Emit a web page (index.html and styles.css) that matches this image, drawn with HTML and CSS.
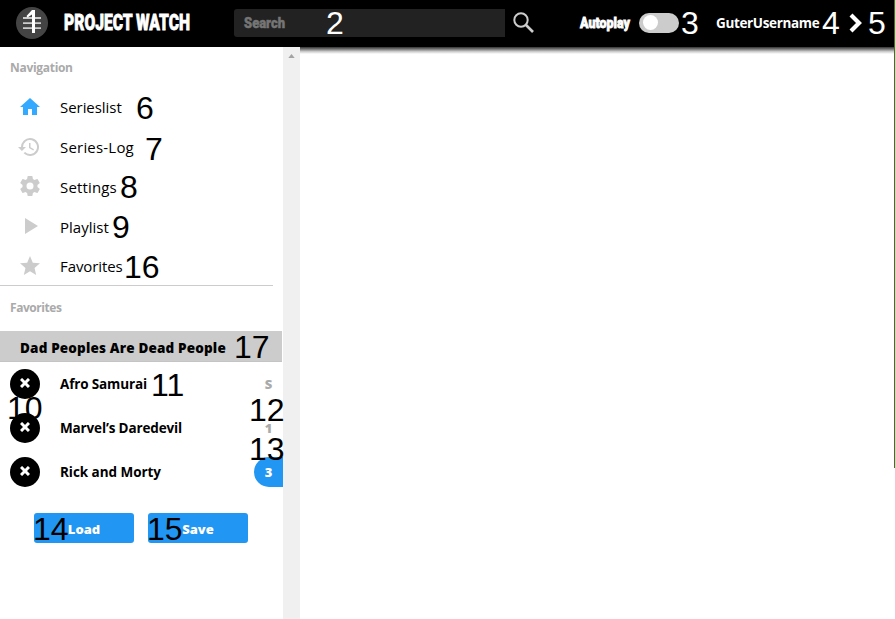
FILE: index.html
```html
<!DOCTYPE html>
<html lang="en">
<head>
<meta charset="utf-8">
<title>Project Watch</title>
<link rel="stylesheet" href="styles.css">
</head>
<body>
<header class="topbar">
  <svg class="logo" viewBox="0 0 32 32"><circle cx="16" cy="16" r="16" fill="#444"/><path d="M7 11h18M7 16.200h18M7 21.200h18" stroke="#ccc" stroke-width="1.800"/><path d="M16 3h3v23h-3V7.500l-4.500 3-1-1.500z" fill="#fff"/></svg>
  <svg class="brand" viewBox="0 0 128 28"><text x="0" y="21" textLength="126" lengthAdjust="spacingAndGlyphs">PROJECT WATCH</text></svg>
  <div class="search"><svg width="60" height="28"><text x="10" y="19" textLength="41" lengthAdjust="spacingAndGlyphs">Search</text></svg></div>
  <svg class="search-icon" viewBox="0 0 22 22" fill="none" stroke="#ccc"><circle cx="8" cy="8" r="6.7" stroke-width="2"/><path d="m13 13 7 7" stroke-width="2.7"/></svg>
  <svg class="autoplay" viewBox="0 0 52 28"><text x="1" y="19" textLength="50" lengthAdjust="spacingAndGlyphs">Autoplay</text></svg>
  <span class="toggle"></span>
  <span class="username">GuterUsername</span>
  <svg class="chevron" viewBox="0 0 14 20"><path d="m2 2 8 8-8 8" fill="none" stroke="#fff" stroke-width="4.2"/></svg>
</header>
<div class="layout">
  <aside class="sidebar">
    <h2>Navigation</h2>
    <nav>
      <a><svg class="active" viewBox="0 0 24 24"><path d="M10 20v-6h4v6h5v-8h3L12 3 2 12h3v8z"/></svg><span class="n1">Serieslist</span></a>
      <a><svg class="history" viewBox="0 0 24 24"><path d="M13 3a9 9 0 0 0-9 9H1l3.89 3.89.07.14L9 12H6a7 7 0 1 1 2.06 4.94l-1.42 1.42A9 9 0 1 0 13 3zm-1 5v5l4.28 2.54.72-1.21-3.5-2.08V8z"/></svg><span class="n2">Series-Log</span></a>
      <a><svg viewBox="0 0 24 24"><path d="M19.43 12.98a7.8 7.8 0 0 0 0-1.96l2.11-1.65a.5.5 0 0 0 .12-.64l-2-3.46a.5.5 0 0 0-.61-.22l-2.49 1a7.3 7.3 0 0 0-1.69-.98l-.38-2.65A.49.49 0 0 0 14 2h-4a.49.49 0 0 0-.49.42l-.38 2.65a7.7 7.7 0 0 0-1.69.98l-2.49-1a.49.49 0 0 0-.61.22l-2 3.46a.49.49 0 0 0 .12.64l2.11 1.65a7.9 7.9 0 0 0 0 1.96l-2.11 1.65a.5.5 0 0 0-.12.64l2 3.46a.5.5 0 0 0 .61.22l2.49-1c.52.4 1.08.73 1.69.98l.38 2.65a.49.49 0 0 0 .49.42h4a.49.49 0 0 0 .49-.42l.38-2.65a7.7 7.7 0 0 0 1.69-.98l2.49 1a.49.49 0 0 0 .61-.22l2-3.46a.5.5 0 0 0-.12-.64zM12 15.5a3.5 3.5 0 1 1 0-7 3.5 3.5 0 0 1 0 7z"/></svg><span class="n3">Settings</span></a>
      <a><svg viewBox="0 0 24 24"><path d="M7 4v16l13-8z"/></svg><span class="n4">Playlist</span></a>
      <a><svg viewBox="0 0 24 24"><path d="m12 17.27 6.18 3.73-1.64-7.03L22 9.24l-7.19-.61L12 2 9.19 8.63 2 9.24l5.46 4.73L5.82 21z"/></svg><span class="n5">Favorites</span></a>
    </nav>
    <h2 class="fav-title">Favorites</h2>
    <div class="current"><span>Dad Peoples Are Dead People</span></div>
    <ul>
      <li><i><svg viewBox="0 0 10 10"><path d="m1 1 8 8M9 1 1 9"/></svg></i><span class="f1">Afro Samurai</span><b>S</b></li>
      <li><i><svg viewBox="0 0 10 10"><path d="m1 1 8 8M9 1 1 9"/></svg></i><span class="f2">Marvel’s Daredevil</span><b>1</b></li>
      <li><i><svg viewBox="0 0 10 10"><path d="m1 1 8 8M9 1 1 9"/></svg></i><span class="f3">Rick and Morty</span><b class="badge">3</b></li>
    </ul>
    <div class="actions"><button>Load</button><button>Save</button></div>
  </aside>
  <div class="scrollbar"><svg viewBox="0 0 8 5"><path d="M0 5 4 0l4 5z" fill="#a3a3a3"/></svg></div>
  <main><div class="shade"></div></main>
</div>
<div class="edge"></div>
<span class="mark light m2">2</span><span class="mark light m3">3</span><span class="mark light m4">4</span><span class="mark light m5">5</span>
<span class="mark m6">6</span><span class="mark m7">7</span><span class="mark m8">8</span><span class="mark m9">9</span>
<span class="mark m10">10</span><span class="mark m11">11</span><span class="mark m12">12</span><span class="mark m13">13</span>
<span class="mark m14">14</span><span class="mark m15">15</span><span class="mark m16">16</span><span class="mark m17">17</span>
</body>
</html>
```
FILE: styles.css
```css
* { box-sizing: border-box; }
body { margin: 0; width: 895px; height: 619px; overflow: hidden; position: relative; background: #fff; font-family: "Open Sans", sans-serif; color: #000; }
.topbar { height: 47px; background: #000; display: flex; align-items: center; padding: 0 0 1px 16px; }
.topbar > * { flex: none; }
.topbar text { font-family: Impact, "Roboto", sans-serif; font-weight: 900; fill: #fff; stroke: #fff; stroke-width: .8px; }
.logo { width: 32px; height: 32px; }
.brand { width: 128px; height: 28px; margin-left: 16px; overflow: visible; }
.brand text { font-size: 22.5px; }
.search { width: 271px; height: 28px; margin-left: 42px; background: #222; border-radius: 3px 0 0 3px; }
.search svg { display: block; }
.search text { font-size: 15px; fill: #757575; stroke: #757575; stroke-width: .5px; }
.search-icon { width: 22px; height: 22px; margin-left: 8px; }
.autoplay { width: 52px; height: 28px; margin-left: 44px; overflow: visible; }
.autoplay text { font-size: 14.5px; }
.toggle { width: 40px; height: 20px; margin-left: 8px; border-radius: 10px; background: #ccc; padding: 2px 4px; }
.toggle::before { content: ""; display: block; width: 15px; height: 15px; border-radius: 50%; background: #fff; }
.username { width: 104px; margin-left: 37px; color: #fff; font-size: 13.5px; font-weight: 700; white-space: nowrap; letter-spacing: -.35px; padding-bottom: 1px; }
.chevron { width: 14px; height: 20px; margin-left: 29px; margin-bottom: 1px; }
.layout { display: flex; height: 572px; }
.sidebar { width: 283px; }
.sidebar h2 { margin: 0; height: 40px; line-height: 42px; padding-left: 10px; font-size: 12px; font-weight: 700; color: #aaa; letter-spacing: -.3px; }
nav { width: 273px; height: 199px; border-bottom: 1px solid #ccc; }
nav a { display: flex; align-items: center; height: 39.8px; padding-left: 18px; font-size: 15px; white-space: nowrap; }
nav svg { width: 24px; height: 24px; margin-right: 18px; fill: #ccc; }
nav .active { fill: #3af; }
nav .history { margin-left: -1px; margin-right: 19px; }
.n1 { letter-spacing: -.05px; }
.n2 { letter-spacing: .2px; }
.n3 { letter-spacing: .15px; padding-top: 1px; }
.n4 { padding-top: 1px; }
.n5 { letter-spacing: -.1px; }
.sidebar .fav-title { height: 45px; line-height: 43px; letter-spacing: -.45px; }
.current { height: 31px; width: 282px; padding-left: 20px; line-height: 34px; background: #ccc; border-bottom: 1px solid #c4c4c4; font-size: 13.5px; font-weight: 800; white-space: nowrap; letter-spacing: .16px; }
ul { list-style: none; margin: 0; padding: 0; }
li { height: 44px; display: flex; align-items: center; padding-left: 10px; font-size: 13.5px; font-weight: 700; white-space: nowrap; }
li i { width: 30px; height: 30px; border-radius: 50%; background: #000; display: flex; align-items: center; justify-content: center; margin-right: 20px; }
li i svg { width: 10px; height: 10px; margin-bottom: 2px; fill: none; stroke: #fff; stroke-width: 3; }
li b { margin-left: auto; width: 29px; height: 30px; line-height: 30px; text-align: center; color: #aaa; font-size: 13px; }
li .badge { background: #2196f3; color: #fff; border-radius: 15px 0 0 15px; }
.f1, .f2 { letter-spacing: -.15px; }
.f3 { letter-spacing: -.05px; }
.actions { display: flex; gap: 14px; padding: 19px 0 0 34px; }
button { width: 100px; height: 30px; padding: 2px 0 0; border: 0; border-radius: 3px; background: #2196f3; color: #fff; font: 800 13px "Open Sans", sans-serif; }
.scrollbar { width: 17px; background: #f0f0f0; padding: 7px 0 0 5px; }
.scrollbar svg { display: block; width: 7px; height: 4px; }
main { flex: 1; }
.shade { height: 7px; background: linear-gradient(#333, #777 30%, #ccc 65%, #fff); }
.edge { position: absolute; top: 0; right: 0; width: 1px; height: 468px; background: #2b7d1b; }
.mark { position: absolute; font: 32px/32px "Liberation Sans", Arial, sans-serif; color: #000; }
.light { color: #fff; }
.m2 { left: 326px; top: 7px; }
.m3 { left: 681px; top: 7px; }
.m4 { left: 822px; top: 7px; }
.m5 { left: 868px; top: 7px; }
.m6 { left: 136px; top: 92px; }
.m7 { left: 145px; top: 133px; }
.m8 { left: 120px; top: 171px; }
.m9 { left: 112px; top: 211px; }
.m10 { left: 7px; top: 392px; }
.m11 { left: 151px; top: 369px; }
.m12 { left: 249px; top: 394px; }
.m13 { left: 249px; top: 433px; }
.m14 { left: 33px; top: 513px; }
.m15 { left: 147px; top: 513px; }
.m16 { left: 124px; top: 251px; }
.m17 { left: 234px; top: 331px; }
```
